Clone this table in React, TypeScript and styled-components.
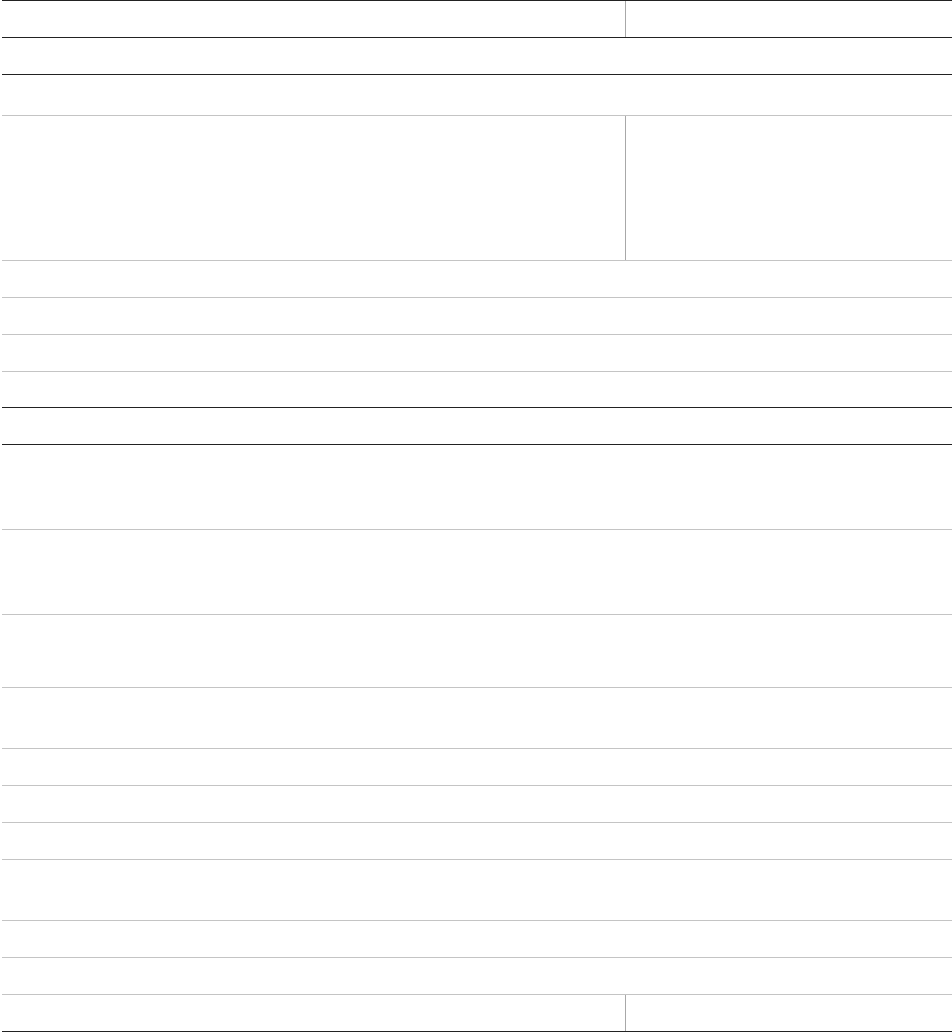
import styled, { createGlobalStyle } from "styled-components";

const GlobalStyle = createGlobalStyle`
  html, body {
    margin: 0;
    padding: 0;
    background: #ffffff;
    font-family: "Liberation Sans", Arial, sans-serif;
  }
`;

const Page = styled.div`
  width: 952px;
  height: 1032px;
  padding-left: 2px;
  box-sizing: border-box;
  overflow: hidden;
`;

const Table = styled.div`
  width: 950px;
  border-top: 1px solid #222222;
  display: flex;
  flex-direction: column;
`;

const Row = styled.div<{ $h: number; $strong?: boolean; $split?: boolean }>`
  height: ${(p) => p.$h}px;
  border-bottom: 1px solid ${(p) => (p.$strong ? "#222222" : "#c4c4c4")};
  display: grid;
  grid-template-columns: ${(p) => (p.$split ? "624px 1fr" : "1fr")};
`;

const Cell = styled.div<{ $divider?: boolean }>`
  border-right: ${(p) => (p.$divider ? "1px solid #a8a8a8" : "none")};
`;

type RowSpec = { h: number; strong?: boolean; split?: boolean };

const rows: RowSpec[] = [
  { h: 36, strong: true, split: true },
  { h: 36, strong: true },
  { h: 40 },
  { h: 144, split: true },
  { h: 36 },
  { h: 36 },
  { h: 36 },
  { h: 35, strong: true },
  { h: 36, strong: true },
  { h: 84 },
  { h: 84 },
  { h: 72 },
  { h: 60 },
  { h: 36 },
  { h: 36 },
  { h: 36 },
  { h: 60 },
  { h: 36 },
  { h: 36 },
  { h: 36, strong: true, split: true },
];

export default function App() {
  return (
    <Page>
      <GlobalStyle />
      <Table>
        {rows.map((r, i) => (
          <Row key={i} $h={r.h} $strong={r.strong} $split={r.split}>
            {r.split ? (
              <>
                <Cell $divider />
                <Cell />
              </>
            ) : (
              <Cell />
            )}
          </Row>
        ))}
      </Table>
    </Page>
  );
}
